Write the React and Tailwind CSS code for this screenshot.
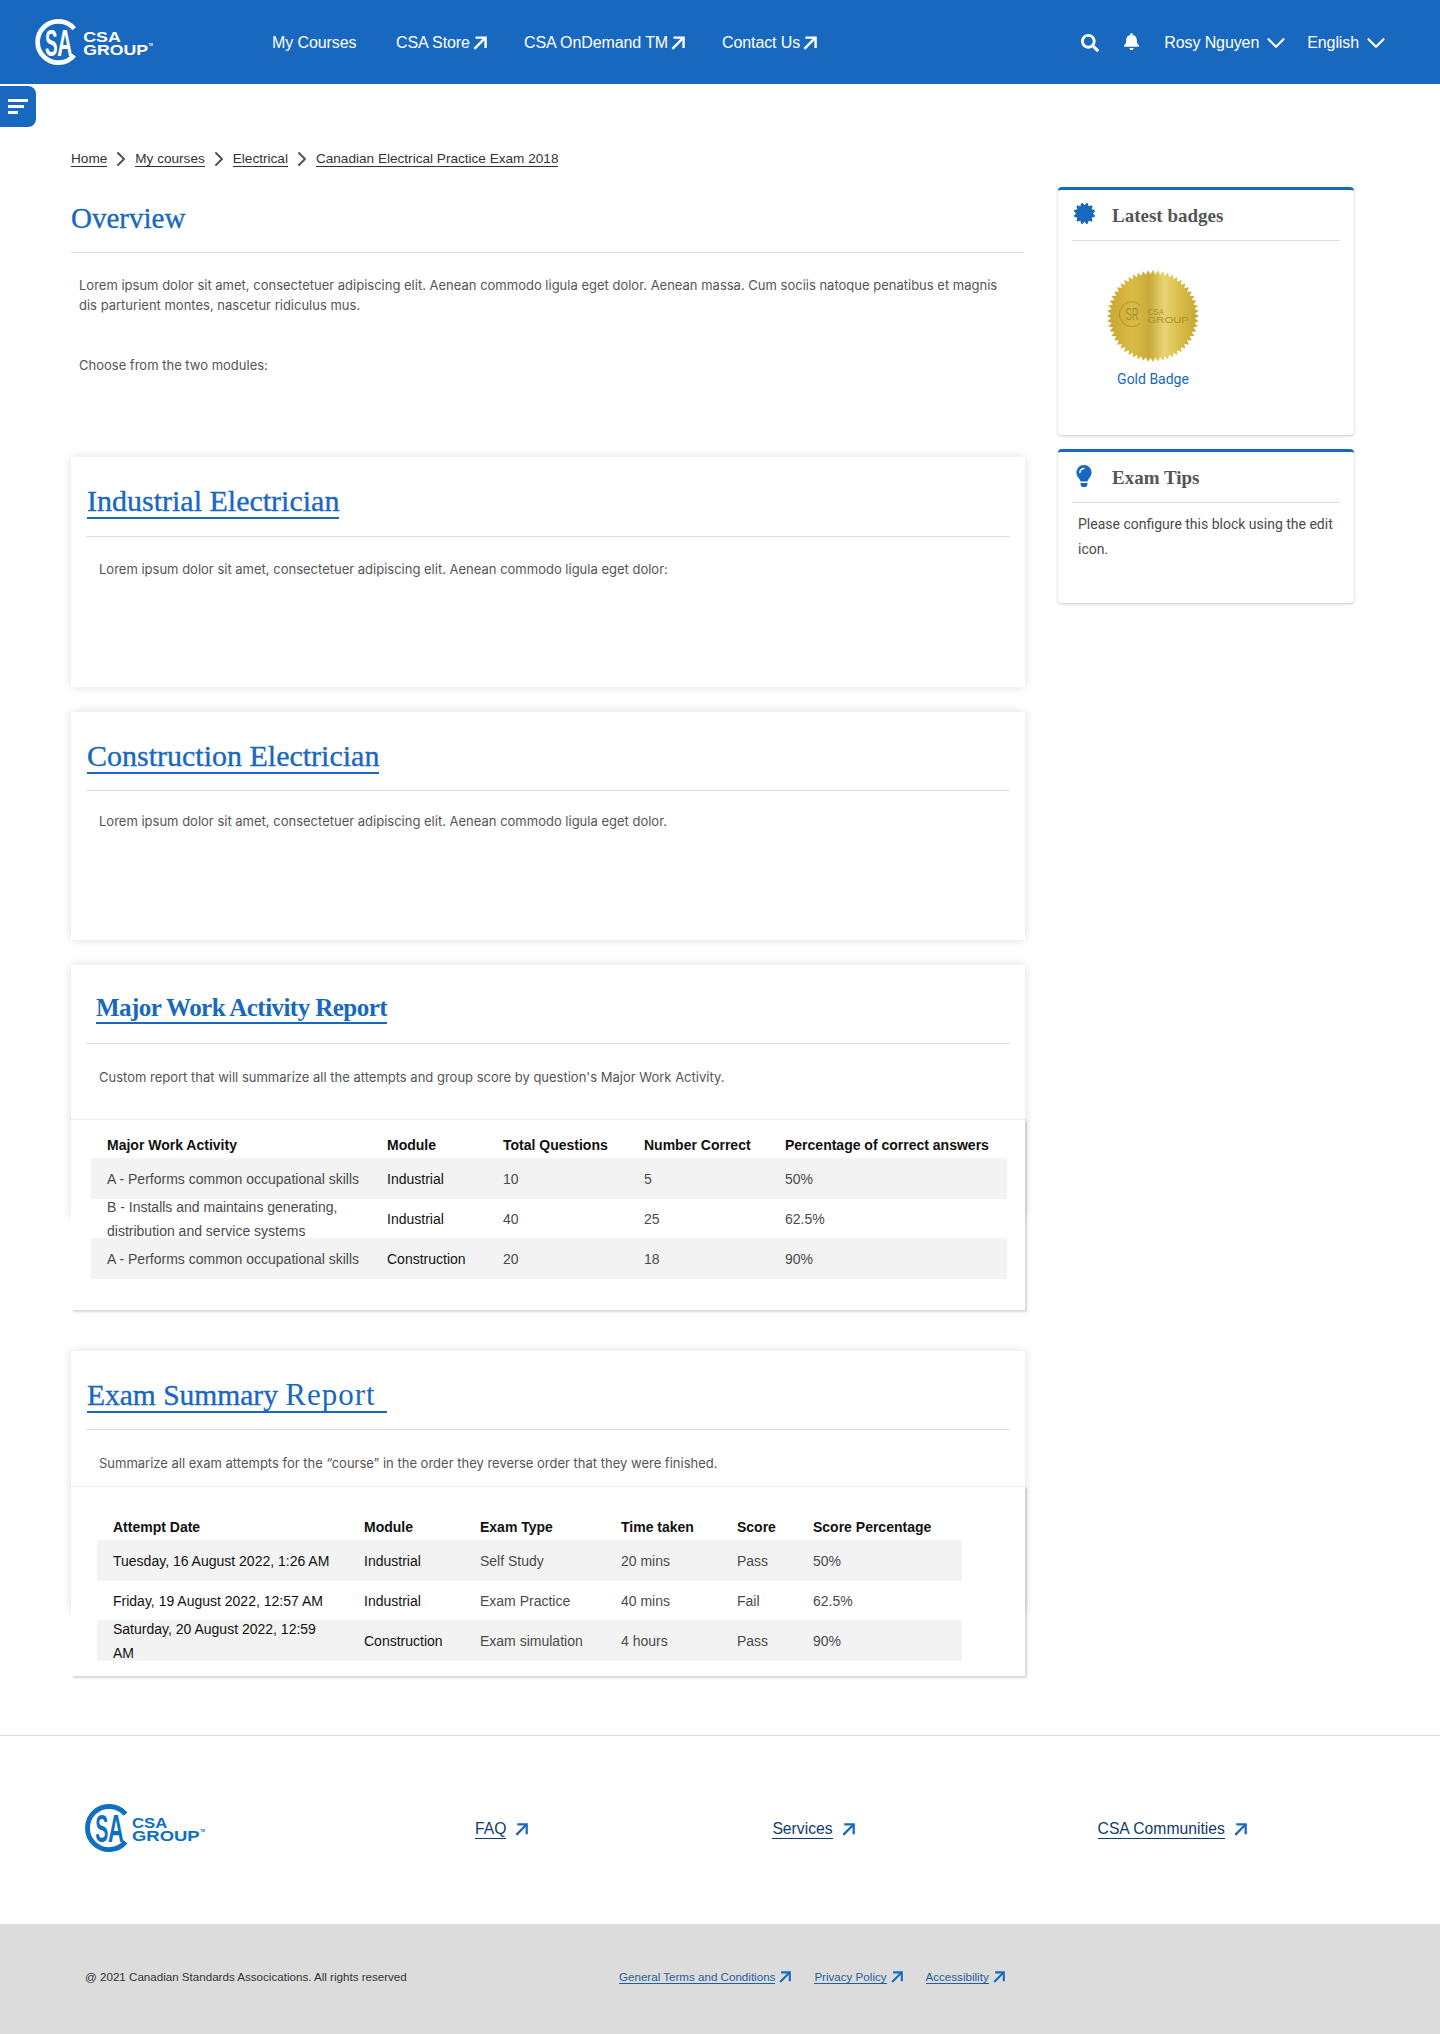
import React from "react";
import { ChevronDown, ChevronRight } from "lucide-react";
import { FaSearch, FaBell, FaCertificate, FaLightbulb } from "react-icons/fa";

const Arrow = ({ className }) => (
  <svg viewBox="0 0 14 14" fill="none" stroke="currentColor" strokeWidth="2.4" className={className}>
    <path d="M2.5 1.6H12.6V12" />
    <path d="M12.2 1.8L1.4 12.8" />
  </svg>
);

const Logo = ({ color, className, tx, cw, gw }) => (
  <svg viewBox="0 0 125 50" className={className} fill={color}>
    <path d="M41.4 10.4A22 22 0 1 0 41.4 38.6" fill="none" stroke={color} strokeWidth="5" />
    <g fontFamily="'Liberation Sans',sans-serif" fontWeight="700">
      <text x="0" y="0" fontSize="40" transform="translate(10.5 39) scale(.5 1)">S</text>
      <text x="0" y="0" fontSize="40" transform="translate(23.5 39) scale(.56 1)">A</text>
      <text x={tx} y="24" fontSize="15.5" textLength={cw} lengthAdjust="spacingAndGlyphs">CSA</text>
      <text x={tx} y="38" fontSize="15.5" textLength={gw} lengthAdjust="spacingAndGlyphs">GROUP</text>
      <text x={tx + gw + 0.5} y="29" fontSize="3.5">TM</text>
    </g>
  </svg>
);

const starPoints = Array.from({ length: 112 }, (_, i) => {
  const r = i % 2 === 0 ? 50 : 45.5;
  const a = (i / 112) * Math.PI * 2;
  return `${(50 + r * Math.cos(a)).toFixed(2)},${(50 + r * Math.sin(a)).toFixed(2)}`;
}).join(" ");

const GoldBadge = () => (
  <svg viewBox="0 0 100 100" className="block w-[92px] h-[92px]">
    <defs>
      <linearGradient id="gold" x1="0" x2="1" y1="0" y2="0">
        <stop offset="0" stopColor="#c9a52e" />
        <stop offset=".28" stopColor="#d9bc47" />
        <stop offset=".46" stopColor="#c9a93a" />
        <stop offset=".62" stopColor="#e9d573" />
        <stop offset=".8" stopColor="#d8bc46" />
        <stop offset="1" stopColor="#c5a332" />
      </linearGradient>
    </defs>
    <polygon points={starPoints} fill="url(#gold)" />
    <path d="M36 38A13.5 13.5 0 1 0 36 58" fill="none" stroke="#a98d2e" strokeWidth=".9" />
    <g fontFamily="'Liberation Sans',sans-serif" fill="#a98d2e">
      <text x="0" y="0" fontSize="17" transform="translate(20 54) scale(.6 1)">S</text>
      <text x="0" y="0" fontSize="17" transform="translate(27 54) scale(.6 1)">R</text>
      <text x="44" y="49" fontSize="9" textLength="18" lengthAdjust="spacingAndGlyphs">CSA</text>
      <text x="44" y="58" fontSize="9.5" textLength="45" lengthAdjust="spacingAndGlyphs">GROUP</text>
    </g>
  </svg>
);

const NavLink = ({ children, ext, className }) => (
  <a className={`flex items-center gap-[3px] text-white text-[16px] tracking-[-0.1px] ${className}`}>
    {children}
    {ext && <Arrow className="w-[14px] h-[14px]" />}
  </a>
);

const Crumb = ({ children }) => (
  <a className="border-b border-[#333] text-[#333] text-[13.6px] leading-[15px]">{children}</a>
);

const Sep = () => <ChevronRight className="w-[24px] h-[24px] text-[#555] mx-[2px]" strokeWidth={2} />;

const bodyFont = "[font-family:Inter,sans-serif] text-[13px] text-[#555555]";
const serif = "[font-family:'Liberation_Serif',serif]";
const stroke = "[-webkit-text-stroke:0.35px_#1868c0]";

const TableCell = ({ w, className, children }) => (
  <div className={`shrink-0 pr-[6px] leading-[24px] ${w} ${className || ""}`}>{children}</div>
);

const ReportRow = ({ cols, cells, h, shaded, dark }) => (
  <div className={`flex items-center ${h} ${shaded ? "bg-[#f3f3f3]" : ""}`}>
    {cells.map((c, i) => (
      <TableCell key={i} w={cols[i]} className={dark.includes(i) ? "text-[#111]" : "text-[#4a4a4a]"}>
        {c}
      </TableCell>
    ))}
  </div>
);

const activityCols = ["w-[296px] pl-[16px]", "w-[116px]", "w-[141px]", "w-[141px]", "w-[222px]"];
const summaryCols = ["w-[267px] pl-[16px]", "w-[116px]", "w-[141px]", "w-[116px]", "w-[76px]", "w-[149px]"];

const SideCard = ({ icon, title, className, children }) => (
  <section className={`rounded-[4px] border-t-[3px] border-[#1868c0] bg-white shadow-[0_1px_3px_rgba(0,0,0,0.22)] ${className}`}>
    <div className="mx-[14px] flex h-[51px] items-center border-b border-[#dedede]">
      <div className="flex w-[40px] shrink-0 justify-center pr-[16px] pb-[3px] text-[#1868c0]">{icon}</div>
      <h3 className={`${serif} pt-[2px] text-[19px] font-bold text-[#555555]`}>{title}</h3>
    </div>
    {children}
  </section>
);

export default function App() {
  return (
    <div className="relative h-[2034px] overflow-hidden bg-white [font-family:'Liberation_Sans',sans-serif] text-[14px]">
      <header className="flex h-[84px] items-center bg-[#1868c0] pl-[35px] pr-[49px]">
        <Logo color="#fff" tx={51} cw={40} gw={69} className="h-[47px] w-[118px] shrink-0" />
        <nav className="ml-[119px] flex items-center pt-[1px]">
          <NavLink className="w-[124px]">My Courses</NavLink>
          <NavLink ext className="w-[128px]">CSA Store</NavLink>
          <NavLink ext className="w-[198px]">CSA OnDemand TM</NavLink>
          <NavLink ext>Contact Us</NavLink>
        </nav>
        <div className="ml-auto flex items-center pt-[1px] text-white">
          <FaSearch className="h-[18px] w-[18px]" />
          <FaBell className="ml-[24px] h-[17px] w-[17px] mb-[2px]" />
          <span className="ml-[24px] text-[16px] tracking-[-0.1px]">Rosy Nguyen</span>
          <ChevronDown className="ml-[2px] h-[30px] w-[30px]" strokeWidth={1.7} />
          <span className="ml-[16px] text-[16px] tracking-[-0.1px]">English</span>
          <ChevronDown className="ml-[2px] h-[30px] w-[30px]" strokeWidth={1.7} />
        </div>
      </header>

      <button className="absolute left-0 top-[86px] flex h-[41px] w-[36px] flex-col justify-center gap-[3px] rounded-r-[8px] bg-[#1868c0] pl-[8px]">
        <span className="h-[3px] w-[20px] bg-white" />
        <span className="h-[3px] w-[16px] bg-white" />
        <span className="h-[3px] w-[10px] bg-white" />
      </button>

      <div className="flex pl-[71px]">
        <main className="w-[954px] shrink-0">
          <div className="mt-[66px] flex h-[18px] items-center">
            <Crumb>Home</Crumb>
            <Sep />
            <Crumb>My courses</Crumb>
            <Sep />
            <Crumb>Electrical</Crumb>
            <Sep />
            <Crumb>Canadian Electrical Practice Exam 2018</Crumb>
          </div>

          <h1 className={`${serif} ${stroke} mr-[1px] mt-[33px] border-b border-[#dedede] pb-[17px] text-[29px] leading-[34px] text-[#1868c0]`}>
            Overview
          </h1>
          <div className={`${bodyFont} mt-[22px] px-[8px] leading-[20px]`}>
            <p>Lorem ipsum dolor sit amet, consectetuer adipiscing elit. Aenean commodo ligula eget dolor. Aenean massa. Cum sociis natoque penatibus et magnis dis parturient montes, nascetur ridiculus mus.</p>
            <p className="mt-[40px]">Choose from the two modules:</p>
          </div>

          <section className="mt-[82px] h-[230px] bg-white px-[15px] shadow-[0_0_10px_rgba(0,0,0,0.13)]">
            <div className="h-[80px] border-b border-[#dedede] pl-[1px] pt-[28px]">
              <a className={`${serif} ${stroke} inline-block border-b-2 border-[#1868c0] text-[30px] leading-[32px] text-[#1868c0]`}>Industrial Electrician</a>
            </div>
            <p className={`${bodyFont} mt-[22px] px-[13px] leading-[20px]`}>Lorem ipsum dolor sit amet, consectetuer adipiscing elit. Aenean commodo ligula eget dolor:</p>
          </section>

          <section className="mt-[25px] h-[228px] bg-white px-[15px] shadow-[0_0_10px_rgba(0,0,0,0.13)]">
            <div className="h-[79px] border-b border-[#dedede] pl-[1px] pt-[28px]">
              <a className={`${serif} ${stroke} inline-block border-b-2 border-[#1868c0] text-[30px] leading-[32px] text-[#1868c0]`}>Construction Electrician</a>
            </div>
            <p className={`${bodyFont} mt-[20px] px-[13px] leading-[20px]`}>Lorem ipsum dolor sit amet, consectetuer adipiscing elit. Aenean commodo ligula eget dolor.</p>
          </section>

          <section className="mt-[25px] h-[251px] bg-white shadow-[0_0_10px_rgba(0,0,0,0.13)]">
            <div className="mx-[15px] h-[79px] border-b border-[#dedede] pl-[10px] pt-[28px]">
              <a className={`${serif} inline-block border-b-2 border-[#1868c0] text-[25px] font-bold leading-[29px] tracking-[-0.55px] text-[#1868c0]`}>Major Work Activity Report</a>
            </div>
            <p className={`${bodyFont} mt-[23px] px-[28px] leading-[20px]`}>Custom report that will summarize all the attempts and group score by question's Major Work Activity.</p>
            <div className="mt-[32px] h-[191px] bg-white pl-[20px] pr-[18px] pt-[12px] border-t border-[#eeeeee] shadow-[2px_2px_2px_rgba(0,0,0,0.16)]">
              <ReportRow cols={activityCols} h="h-[26px]" dark={[0, 1, 2, 3, 4]} cells={[<b>Major Work Activity</b>, <b>Module</b>, <b>Total Questions</b>, <b>Number Correct</b>, <b>Percentage of correct answers</b>]} />
              <ReportRow cols={activityCols} h="h-[41px]" shaded dark={[1]} cells={["A - Performs common occupational skills", "Industrial", "10", "5", "50%"]} />
              <ReportRow cols={activityCols} h="h-[39px]" dark={[1]} cells={["B - Installs and maintains generating, distribution and service systems", "Industrial", "40", "25", "62.5%"]} />
              <ReportRow cols={activityCols} h="h-[41px]" shaded dark={[1]} cells={["A - Performs common occupational skills", "Construction", "20", "18", "90%"]} />
            </div>
          </section>

          <section className="mt-[135px] h-[261px] bg-white shadow-[0_0_10px_rgba(0,0,0,0.13)]">
            <div className="mx-[15px] h-[79px] border-b border-[#dedede] pl-[1px] pt-[28px]">
              <a className={`${serif} inline-block w-[300px] whitespace-nowrap border-b-2 border-[#1868c0] text-[30px] leading-[32px] text-[#1868c0]`}>
                <span className={`${stroke} text-[29.5px]`}>Exam Summary </span><span className="text-[31px] tracking-[1px]">Report</span>
              </a>
            </div>
            <p className={`${bodyFont} mt-[23px] px-[28px] leading-[20px]`}>Summarize all exam attempts for the “course” in the order they reverse order that they were finished.</p>
            <div className="mt-[13px] h-[190px] bg-white pl-[26px] pt-[27px] border-t border-[#eeeeee] shadow-[2px_2px_2px_rgba(0,0,0,0.16)]">
              <div className="w-[865px]">
                <ReportRow cols={summaryCols} h="h-[26px]" dark={[0, 1, 2, 3, 4, 5]} cells={[<b>Attempt Date</b>, <b>Module</b>, <b>Exam Type</b>, <b>Time taken</b>, <b>Score</b>, <b>Score Percentage</b>]} />
                <ReportRow cols={summaryCols} h="h-[41px]" shaded dark={[0, 1]} cells={["Tuesday, 16 August 2022, 1:26 AM", "Industrial", "Self Study", "20 mins", "Pass", "50%"]} />
                <ReportRow cols={summaryCols} h="h-[39px]" dark={[0, 1]} cells={["Friday, 19 August 2022, 12:57 AM", "Industrial", "Exam Practice", "40 mins", "Fail", "62.5%"]} />
                <ReportRow cols={summaryCols} h="h-[41px]" shaded dark={[0, 1]} cells={[<>Saturday, 20 August 2022, 12:59<br />AM</>, "Construction", "Exam simulation", "4 hours", "Pass", "90%"]} />
              </div>
            </div>
          </section>
        </main>

        <aside className="ml-[33px] mt-[103px] w-[296px] shrink-0">
          <SideCard title="Latest badges" icon={<FaCertificate className="h-[21px] w-[21px]" />} className="h-[248px]">
            <div className="ml-[49px] mt-[29px] w-[92px]">
              <GoldBadge />
              <a className="mt-[7px] block whitespace-nowrap text-center [font-family:Roboto,sans-serif] text-[14px] text-[#1868c0]">Gold Badge</a>
            </div>
          </SideCard>
          <SideCard title="Exam Tips" icon={<FaLightbulb className="h-[22px] w-[22px]" />} className="mt-[14px] h-[154px]">
            <p className="mt-[9px] px-[20px] [font-family:Roboto,sans-serif] text-[14px] leading-[25px] text-[#4a4a4a]">Please configure this block using the edit icon.</p>
          </SideCard>
        </aside>
      </div>

      <footer className="absolute inset-x-0 bottom-0">
        <div className="flex h-[189px] items-start border-t border-[#dcdcdc] bg-white pl-[85px] pt-[68px]">
          <Logo color="#0f6fc0" tx={48} cw={36} gw={69} className="h-[49px] w-[122.5px] shrink-0" />
          <div className="ml-[267.5px] mt-[16px] flex items-center gap-[9px] text-[15.7px] text-[#123a6b]">
            <a className="border-b border-[#123a6b] leading-[18px]">FAQ</a><Arrow className="h-[13px] w-[13px] text-[#1868c0]" />
          </div>
          <div className="ml-[244px] mt-[16px] flex items-center gap-[9px] text-[15.7px] text-[#123a6b]">
            <a className="border-b border-[#123a6b] leading-[18px]">Services</a><Arrow className="h-[13px] w-[13px] text-[#1868c0]" />
          </div>
          <div className="ml-[243px] mt-[16px] flex items-center gap-[9px] text-[15.7px] text-[#123a6b]">
            <a className="border-b border-[#123a6b] leading-[18px]">CSA Communities</a><Arrow className="h-[13px] w-[13px] text-[#1868c0]" />
          </div>
        </div>
        <div className="flex h-[110px] items-center bg-[#dcdcdc] pl-[85px] pb-[5px] text-[11.6px]">
          <span className="w-[534px] text-[#333]">@ 2021 Canadian Standards Assocications. All rights reserved</span>
          <div className="flex items-center gap-[4px] text-[#1f5f9f]"><a className="border-b border-[#1f5f9f] leading-[13px]">General Terms and Conditions</a><Arrow className="h-[12px] w-[12px] text-[#1868c0]" /></div>
          <div className="ml-[23px] flex items-center gap-[4px] text-[#1f5f9f]"><a className="border-b border-[#1f5f9f] leading-[13px]">Privacy Policy</a><Arrow className="h-[12px] w-[12px] text-[#1868c0]" /></div>
          <div className="ml-[23px] flex items-center gap-[4px] text-[#1f5f9f]"><a className="border-b border-[#1f5f9f] leading-[13px]">Accessibility</a><Arrow className="h-[12px] w-[12px] text-[#1868c0]" /></div>
        </div>
      </footer>
    </div>
  );
}
